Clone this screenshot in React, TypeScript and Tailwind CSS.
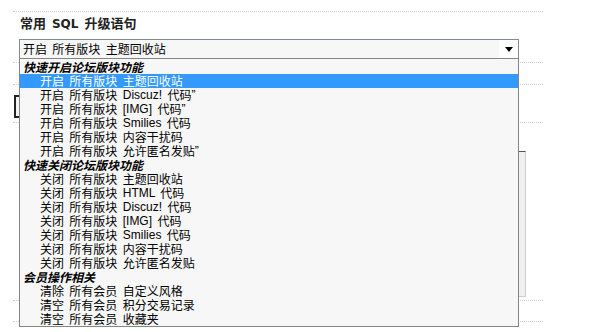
import React from "react";

const LATIN = /^[\x00-\x7f\u201d]+$/;

function Txt({ s }: { s: string }) {
  const parts = s.split(/([\x00-\x7f\u201d]+)/).filter((p) => p.length > 0);
  return (
    <>
      {parts.map((p, i) =>
        LATIN.test(p) ? (
          <span key={i} className="inline-block align-top h-[14px] font-['Liberation_Sans',sans-serif] text-[12px] leading-[14px] whitespace-pre [word-spacing:2px]">
            {p}
          </span>
        ) : (
          <span key={i} className="inline-block align-top h-[14px] leading-[14px]">{p}</span>
        )
      )}
    </>
  );
}

type Row = { h?: boolean; t: string; sel?: boolean };

const rows: Row[] = [
  { h: true, t: "快速开启论坛版块功能" },
  { t: "开启 所有版块 主题回收站", sel: true },
  { t: "开启 所有版块 Discuz! 代码\u201d" },
  { t: "开启 所有版块 [IMG] 代码\u201d" },
  { t: "开启 所有版块 Smilies 代码" },
  { t: "开启 所有版块 内容干扰码" },
  { t: "开启 所有版块 允许匿名发贴\u201d" },
  { h: true, t: "快速关闭论坛版块功能" },
  { t: "关闭 所有版块 主题回收站" },
  { t: "关闭 所有版块 HTML 代码" },
  { t: "关闭 所有版块 Discuz! 代码" },
  { t: "关闭 所有版块 [IMG] 代码" },
  { t: "关闭 所有版块 Smilies 代码" },
  { t: "关闭 所有版块 内容干扰码" },
  { t: "关闭 所有版块 允许匿名发贴" },
  { h: true, t: "会员操作相关" },
  { t: "清除 所有会员 自定义风格" },
  { t: "清空 所有会员 积分交易记录" },
  { t: "清空 所有会员 收藏夹" },
];

export default function App() {
  return (
    <div className="relative w-[600px] h-[332px] overflow-hidden bg-white text-black font-['Noto_Sans_CJK_SC',sans-serif] text-[12px]">
      <div className="ml-[13px] w-[530px] pt-[11px]">
        <div className="border-t border-dotted border-[#cfcfcf]" />
        {/* title + select row */}
        <div className="pl-[6px] pb-[3px] border-b border-dotted border-[#cfcfcf]">
          <div className="mt-[2px] h-[18px] leading-[18px] pl-[1px] font-bold text-[13px] text-[#222] whitespace-pre [word-spacing:3px]">
            常用 <span className="font-['DejaVu_Sans',sans-serif] text-[12px]">SQL</span> 升级语句
          </div>
          <div className="mt-[7px] h-[20px] w-[500px] flex border border-[#7d8c95] bg-[#f7f7f7]">
            <div className="flex-1 pl-[3px] pt-[2px] whitespace-pre">
              <Txt s="开启 所有版块 主题回收站" />
            </div>
            <div className="w-[19px] bg-white flex items-center justify-center">
              <svg width="8" height="5" viewBox="0 0 8 5">
                <polygon points="0,0 8,0 4,5" fill="#000" />
              </svg>
            </div>
          </div>
        </div>
        <div className="h-[22px] border-b border-dotted border-[#cfcfcf]" />
        <div className="h-[38px] border-b border-dotted border-[#cfcfcf] pt-[10px]">
          <div className="ml-[1px] h-[23px] w-[80px] border-2 border-[#222] bg-[#f4f4f4]" />
        </div>
        <div className="h-[178px] border-b border-dotted border-[#cfcfcf] pt-[28px] pl-[6px]">
          <div className="h-[146px] w-[507px] border border-[#ccc] border-t-[#555] bg-[#f0f0f0]" />
        </div>
        <div className="h-[21px] border-b border-dotted border-[#cfcfcf]" />
      </div>

      {/* open dropdown list */}
      <div className="absolute left-[19px] top-[58px] w-[500px] h-[269px] border border-[#858585] bg-[#f7f7f7] pt-[1px] overflow-hidden">
        {rows.map((r, i) =>
          r.h ? (
            <div key={i} className="h-[14px] pl-[3px] font-bold italic whitespace-pre">
              <span className="inline-block align-top h-[14px] leading-[14px]">{r.t}</span>
            </div>
          ) : (
            <div
              key={i}
              className={
                "h-[14px] pl-[20px] whitespace-pre " +
                (r.sel ? "bg-[#3399ff] text-white" : "")
              }
            >
              <Txt s={r.t} />
            </div>
          )
        )}
      </div>
    </div>
  );
}
